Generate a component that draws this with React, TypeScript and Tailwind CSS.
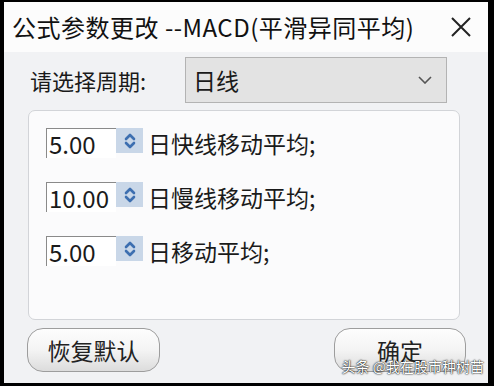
import React from "react";

const font = { fontFamily: '"Noto Sans CJK SC", "Noto Sans", sans-serif' };

function Spin({ value, label }: { value: string; label: string }) {
  return (
    <div className="flex items-start h-[30px]">
      <div className="w-[70px] h-[30px] border-l border-t border-[#8a8a8a] bg-white flex items-center pl-[2px] text-[24px] leading-none text-[#1a1a1a]">
        {value}
      </div>
      <div className="w-[27px] h-[25px] bg-[#c9d7e8] flex items-center justify-center">
        <svg width="12" height="18" viewBox="0 0 12 18">
          <path d="M2 7 L6 3 L10 7" fill="none" stroke="#3d6fb0" strokeWidth="2.6" strokeLinecap="round" strokeLinejoin="round" />
          <path d="M2 11 L6 15 L10 11" fill="none" stroke="#3d6fb0" strokeWidth="2.6" strokeLinecap="round" strokeLinejoin="round" />
        </svg>
      </div>
      <div className="ml-[5px] h-[30px] flex items-center text-[23px] leading-none text-[#1a1a1a]">{label}</div>
    </div>
  );
}

export default function App() {
  return (
    <div style={font} className="w-[494px] h-[386px] bg-black pl-[4px] pr-[6px] pt-[2px] pb-[3px] overflow-hidden">
      <div className="w-full h-full flex flex-col bg-[#f1f2f4]">
        <div className="h-[50px] bg-[#fcfcfc] flex items-center justify-between pl-[8px] pr-[16px]">
          <div className="text-[24px] leading-none tracking-[0.5px] text-[#111] whitespace-nowrap">公式参数更改 --MACD(平滑异同平均)</div>
          <svg width="22" height="22" viewBox="0 0 22 22">
            <path d="M2 2 L20 20 M20 2 L2 20" stroke="#222" strokeWidth="2" />
          </svg>
        </div>
        <div className="flex items-center mt-[5px]">
          <div className="w-[181px] pl-[26px] text-[22px] leading-none text-[#1a1a1a] whitespace-nowrap">请选择周期:</div>
          <div className="w-[262px] h-[46px] bg-[#e3e3e3] border border-[#b3b3b3] flex items-center justify-between pl-[7px] pr-[14px]">
            <span className="text-[23px] leading-none text-[#1a1a1a]">日线</span>
            <svg width="14" height="8" viewBox="0 0 14 8">
              <path d="M1 1 L7 7 L13 1" fill="none" stroke="#555" strokeWidth="1.6" />
            </svg>
          </div>
        </div>
        <div className="ml-[24px] mt-[7px] w-[432px] h-[210px] bg-[#fbfbfc] border border-[#d2d4d8] rounded-[7px] pt-[17px] pl-[17px] flex flex-col gap-[24px]">
          <Spin value="5.00" label="日快线移动平均;" />
          <Spin value="10.00" label="日慢线移动平均;" />
          <Spin value="5.00" label="日移动平均;" />
        </div>
        <div className="relative flex justify-between mt-[8px] pl-[23px] pr-[22px]">
          <div className="w-[133px] h-[44px] rounded-[16px] border border-[#9d9d9d] bg-gradient-to-b from-[#fdfdfd] via-[#f4f4f4] to-[#dcdcdc] flex items-center justify-center text-[23px] leading-none text-[#222]">
            恢复默认
          </div>
          <div className="w-[132px] h-[44px] rounded-[16px] border border-[#9d9d9d] bg-gradient-to-b from-[#fdfdfd] via-[#f4f4f4] to-[#dcdcdc] flex items-center justify-center text-[23px] leading-none text-[#222]">
            确定
          </div>
          <div className="absolute right-[4px] top-[31px] text-[14px] leading-none text-white whitespace-nowrap [text-shadow:0_0_2px_#000,0_0_1px_#000]">
            头条 @我在股市种树苗
          </div>
        </div>
      </div>
    </div>
  );
}
